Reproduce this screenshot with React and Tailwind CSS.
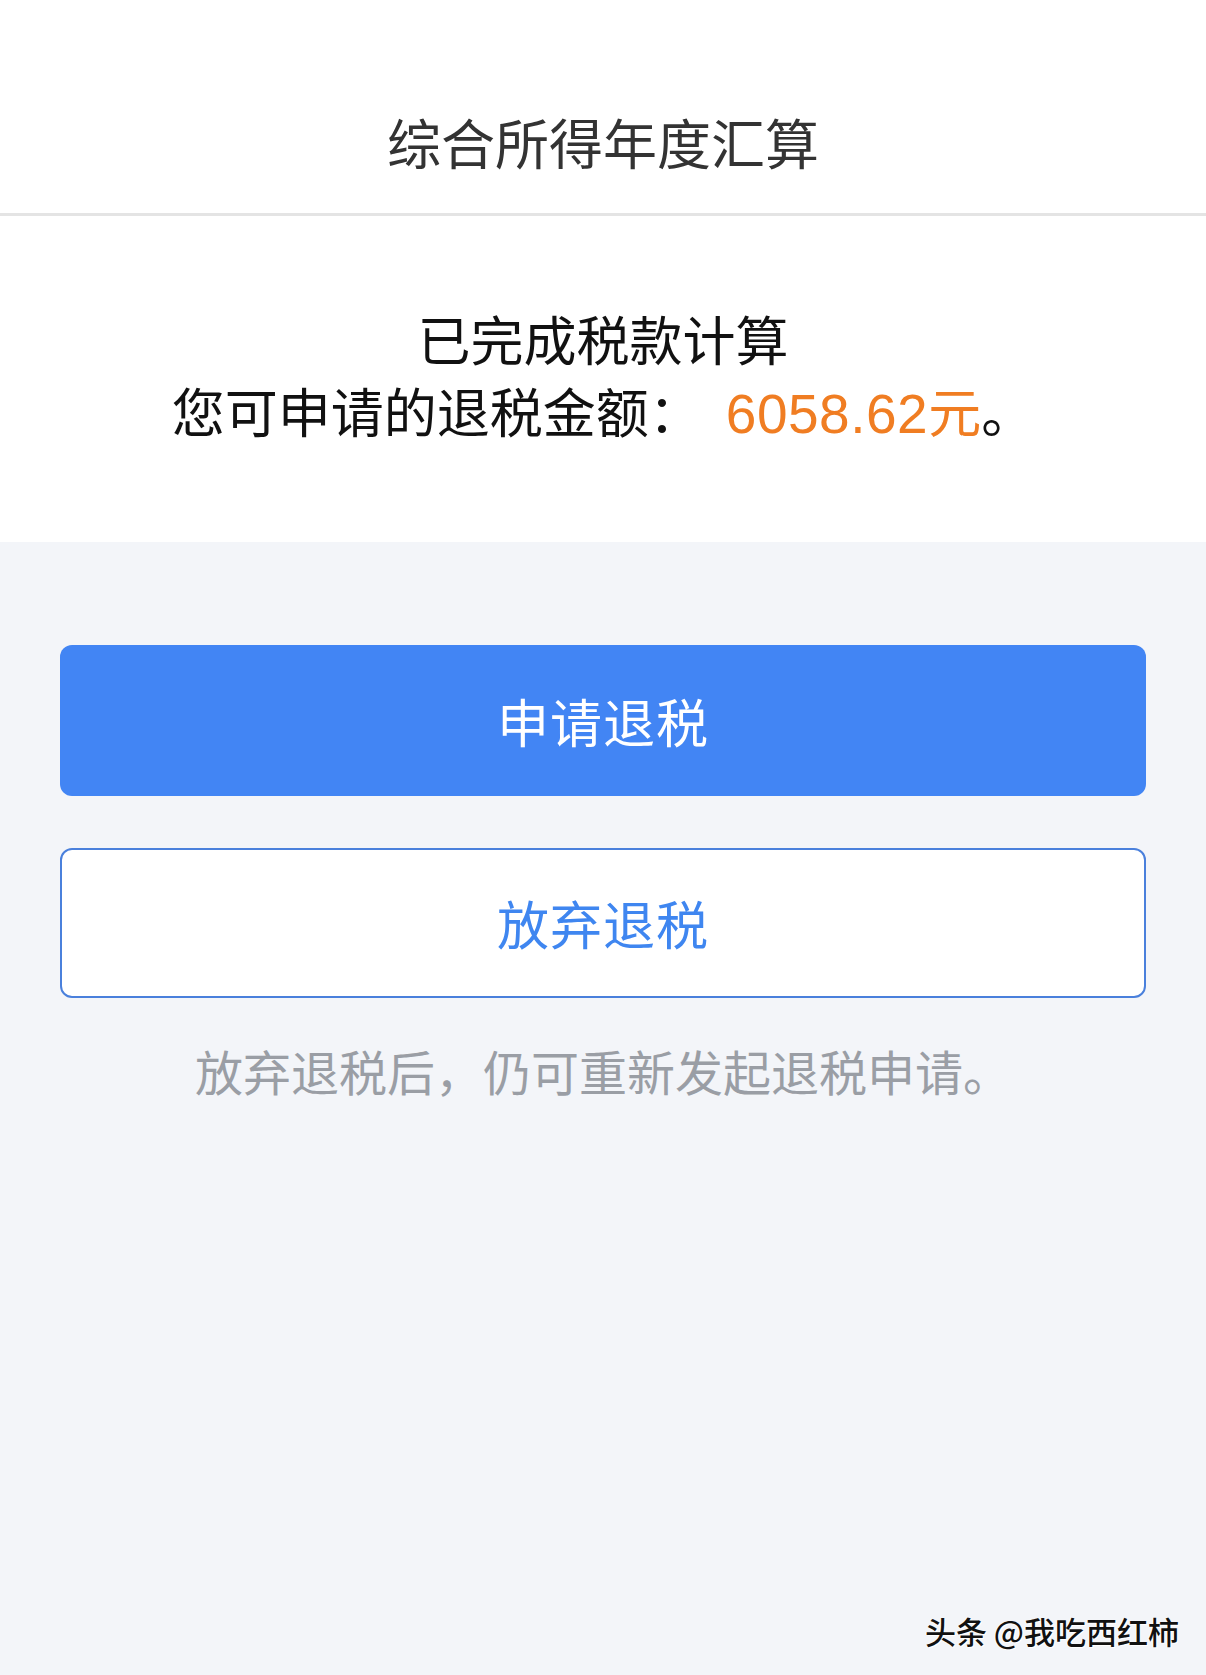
import React from "react";

const font = "font-['PingFang_SC','Noto_Sans_CJK_SC',sans-serif]";

export default function App() {
  return (
    <div className={`relative min-h-[1675px] bg-[#f3f5f9] ${font}`}>
      {/* 顶部标题栏 */}
      <header className="h-[216px] bg-white border-b-[3px] border-[#e4e4e4] pt-[110px]">
        <h1 className="text-center text-[54px] leading-[64px] text-[#333333] font-normal">
          综合所得年度汇算
        </h1>
      </header>

      {/* 结果区 */}
      <section className="bg-white pt-[86px] pb-[92px] text-center text-[#111111]">
        <p className="text-[53px] leading-[72px]">已完成税款计算</p>
        <p className="text-[53px] leading-[72px]">
          您可申请的退税金额：
          <span className="ml-[24px] text-[#f07d22]">
            <span className="font-['Liberation_Sans',sans-serif] text-[55px] tracking-[0.5px]">6058.62</span>元
          </span>
          。
        </p>
      </section>

      {/* 操作按钮 */}
      <div className="px-[60px] pt-[103px]">
        <button className="w-full h-[151px] rounded-[12px] bg-[#4285f4] text-white text-[52px] tracking-[1px]">
          申请退税
        </button>
        <button className="mt-[52px] w-full h-[150px] rounded-[12px] bg-white border-2 border-[#4a80dc] text-[#3f86f0] text-[52px] tracking-[1px]">
          放弃退税
        </button>
        <p className="mt-[44px] text-center text-[48px] leading-[56px] text-[#9a9ea5]">
          放弃退税后，仍可重新发起退税申请。
        </p>
      </div>

      {/* 水印 */}
      <div className="absolute right-[27px] bottom-[25px] text-[31px] leading-[38px] font-medium text-[#111] [text-shadow:1px_1px_0_#fff,-1px_0_0_#fff]">
        头条 @我吃西红柿
      </div>
    </div>
  );
}
